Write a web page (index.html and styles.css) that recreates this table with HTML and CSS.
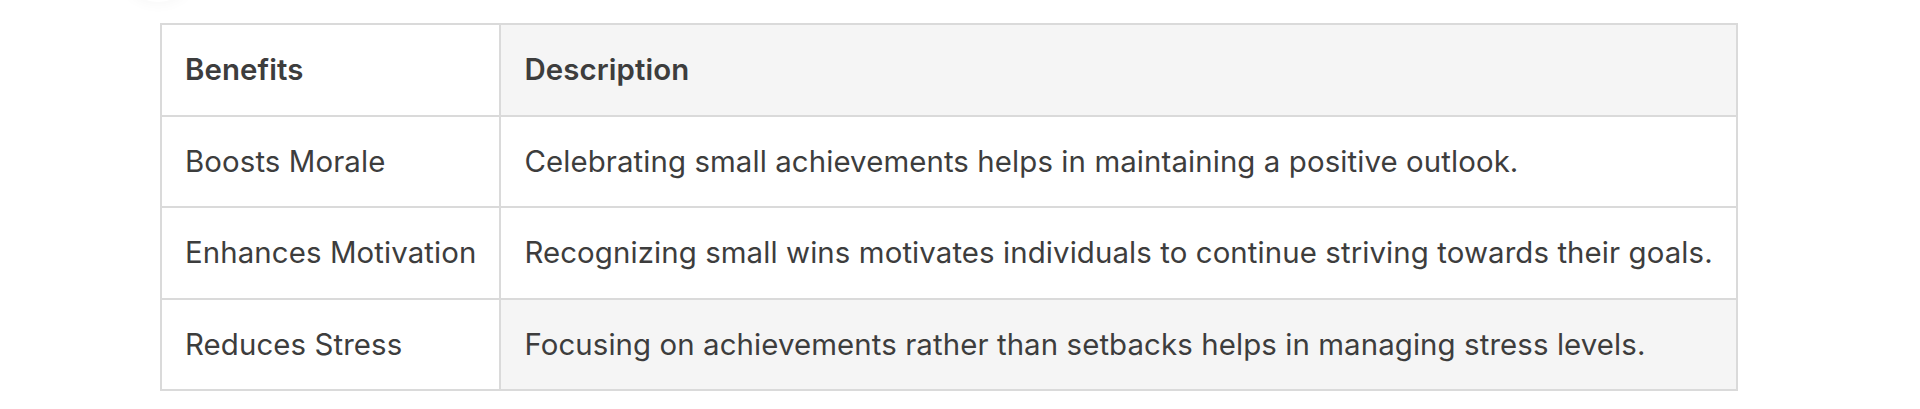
FILE: index.html
```html
<!DOCTYPE html>
<html lang="en">
<head>
<meta charset="utf-8">
<title>Benefits</title>
<link rel="stylesheet" href="styles.css">
</head>
<body>
<div class="shadow-blob"></div>
<div class="wrap">
  <table class="benefits">
    <thead>
      <tr>
        <th class="c1">Benefits</th>
        <th class="c2 shade">Description</th>
      </tr>
    </thead>
    <tbody>
      <tr>
        <td class="c1">Boosts Morale</td>
        <td class="c2">Celebrating small achievements helps in maintaining a positive outlook.</td>
      </tr>
      <tr>
        <td class="c1">Enhances Motivation</td>
        <td class="c2">Recognizing small wins motivates individuals to continue striving towards their goals.</td>
      </tr>
      <tr>
        <td class="c1">Reduces Stress</td>
        <td class="c2 shade">Focusing on achievements rather than setbacks helps in managing stress levels.</td>
      </tr>
    </tbody>
  </table>
</div>
</body>
</html>
```
FILE: styles.css
```css
html, body {
  margin: 0;
  padding: 0;
  background: #ffffff;
}
body {
  font-family: Inter, "Noto Sans", "Liberation Sans", sans-serif;
  color: #3d3d3d;
  position: relative;
  overflow: hidden;
  height: 409px;
}
.shadow-blob {
  position: absolute;
  left: 122px;
  top: -62px;
  width: 72px;
  height: 64px;
  border-radius: 50%;
  background: #ffffff;
  box-shadow: 0 2px 14px rgba(0, 0, 0, 0.035);
}
.wrap {
  padding: 23px 0 0 160px;
  width: 1577px;
}
.benefits {
  width: 100%;
  border-collapse: collapse;
  border: 2px solid #dadada;
  font-size: 29.4px;
  line-height: 41.5px;
  letter-spacing: 0.1px;
}
.benefits th,
.benefits td {
  border: 2px solid #dadada;
  padding: 24px 23px;
  text-align: left;
  vertical-align: middle;
  white-space: nowrap;
}
.benefits th {
  font-weight: 600;
}
.benefits .c1 {
  background: #ffffff;
}
.benefits .c2 {
  width: 100%;
  background: #ffffff;
}
.benefits .shade {
  background: #f5f5f5;
}
```
